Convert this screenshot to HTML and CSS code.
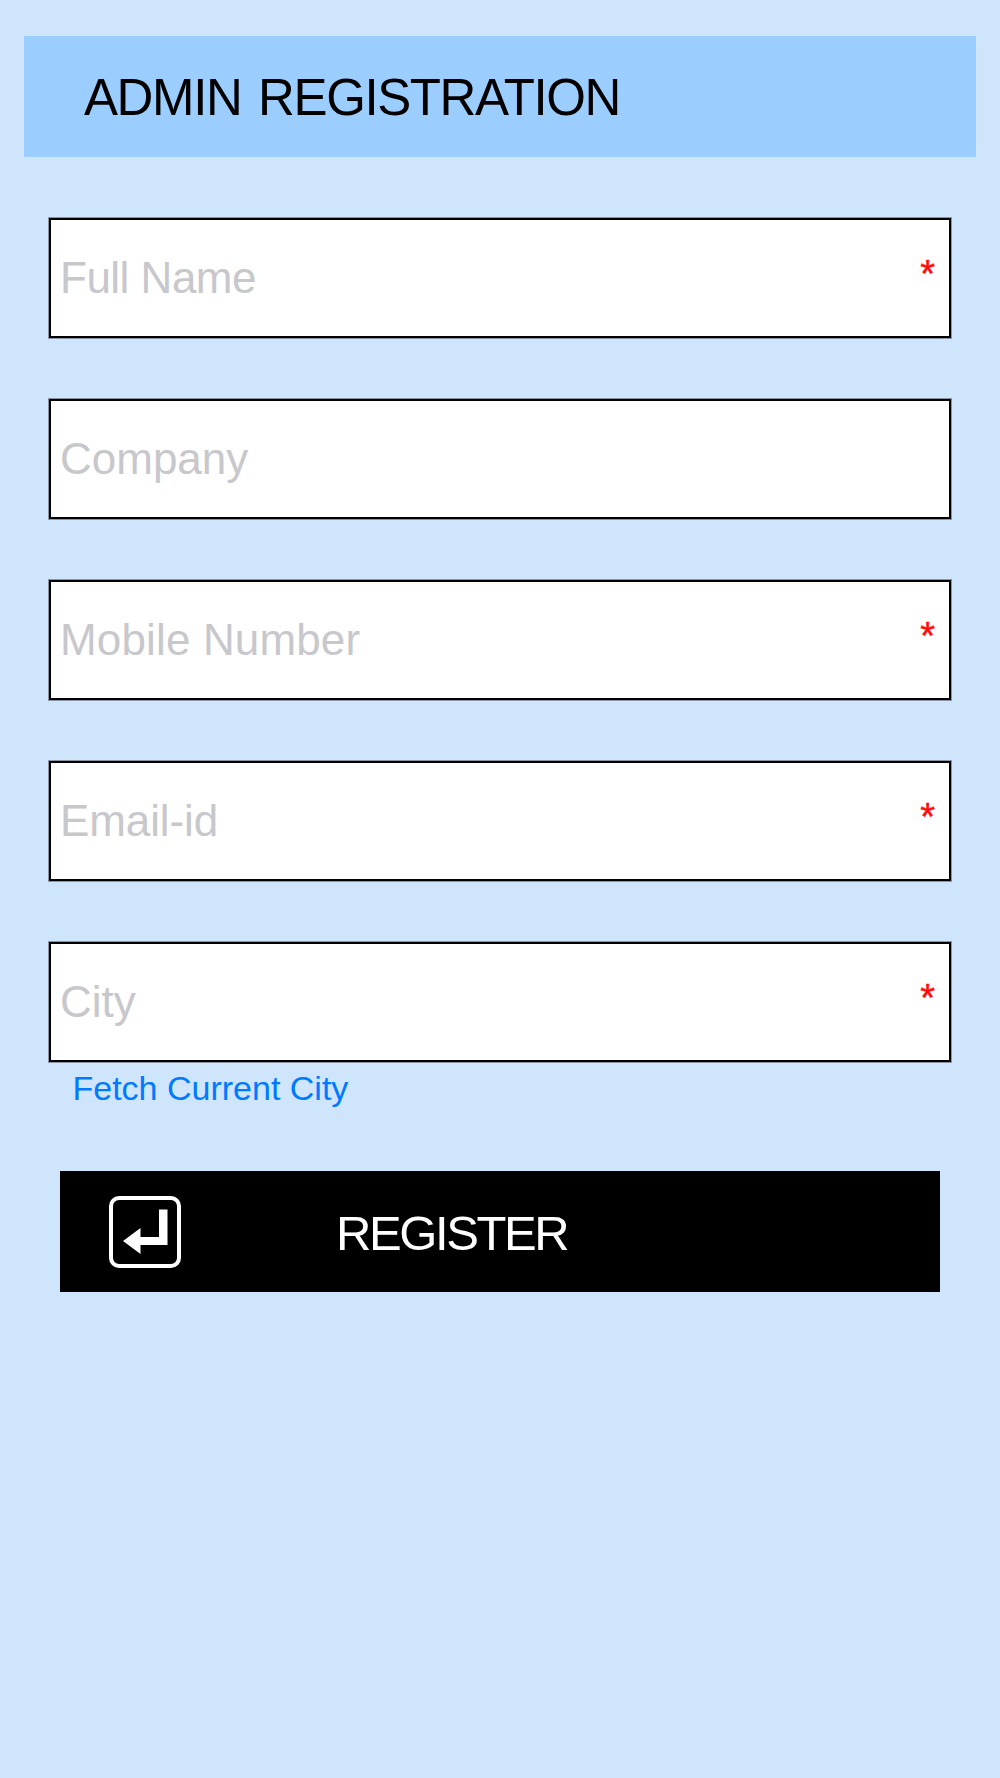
FILE: index.html
```html
<!DOCTYPE html>
<html lang="en">
<head>
<meta charset="utf-8">
<title>Admin Registration</title>
<link rel="stylesheet" href="styles.css">
</head>
<body>
<main class="page">
  <header class="header"><h1 class="title">ADMIN REGISTRATION</h1></header>
  <form class="form">
    <div class="field"><span class="hint hint-name">Full Name</span><span class="required">*</span></div>
    <div class="field"><span class="hint">Company</span></div>
    <div class="field"><span class="hint hint-mobile">Mobile Number</span><span class="required">*</span></div>
    <div class="field"><span class="hint hint-email">Email-id</span><span class="required">*</span></div>
    <div class="field"><span class="hint">City</span><span class="required">*</span></div>
  </form>
  <a class="fetch">Fetch Current City</a>
  <div class="register">
    <svg class="icon" viewBox="0 0 72 72" width="72" height="72">
      <rect x="2" y="2" width="68" height="68" rx="8" fill="none" stroke="#fff" stroke-width="4"/>
      <path d="M50 13.5h8.500V49H31.500v9L14 45l17.500-13v9H50z" fill="#fff"/>
    </svg>
    <span class="register-label">REGISTER</span>
  </div>
</main>
</body>
</html>
```
FILE: styles.css
```css
* { box-sizing: border-box; }
body {
  margin: 0;
  background: #cfe5fc;
  font-family: "Liberation Sans", Arial, sans-serif;
}
.page {
  display: flex;
  flex-direction: column;
  min-height: 1778px;
  padding: 36px 24px 0;
}
.header {
  display: flex;
  align-items: center;
  height: 121px;
  padding: 3px 0 0 60px;
  background: #9bcdff;
}
.title {
  margin: 0;
  font-size: 51px;
  font-weight: 400;
  line-height: 58px;
  letter-spacing: -1.4px;
  word-spacing: 4px;
  white-space: nowrap;
}
.form {
  display: flex;
  flex-direction: column;
  gap: 61px;
  padding: 61px 25px 0;
}
.field {
  display: flex;
  align-items: center;
  justify-content: space-between;
  height: 120px;
  padding: 0 14px 0 9px;
  border: 2px solid #000;
  box-shadow: 0 0 0 1px rgba(0, 0, 0, .35);
  background: #fff;
}
.hint {
  color: #c7c7cc;
  font-size: 44px;
  line-height: 50px;
  white-space: nowrap;
}
.hint-name { letter-spacing: -.5px; }
.hint-mobile { letter-spacing: .15px; }
.hint-email { letter-spacing: -.1px; }
.required {
  padding-bottom: 8px;
  color: #ff0d0d;
  font-size: 38px;
  line-height: 44px;
  -webkit-text-stroke: .5px #ff0d0d;
}
.fetch {
  margin: 7px 0 0 48.5px;
  color: #007aff;
  font-size: 34px;
  line-height: 38px;
}
.register {
  display: flex;
  align-items: center;
  height: 121px;
  margin: 64px 36px 0;
  padding: 1px 0 0 49px;
  background: #000;
  color: #fff;
}
.icon { flex: none; }
.register-label {
  margin-left: 155px;
  padding-top: 1px;
  font-size: 49px;
  line-height: 56px;
  letter-spacing: -2.4px;
}
```
